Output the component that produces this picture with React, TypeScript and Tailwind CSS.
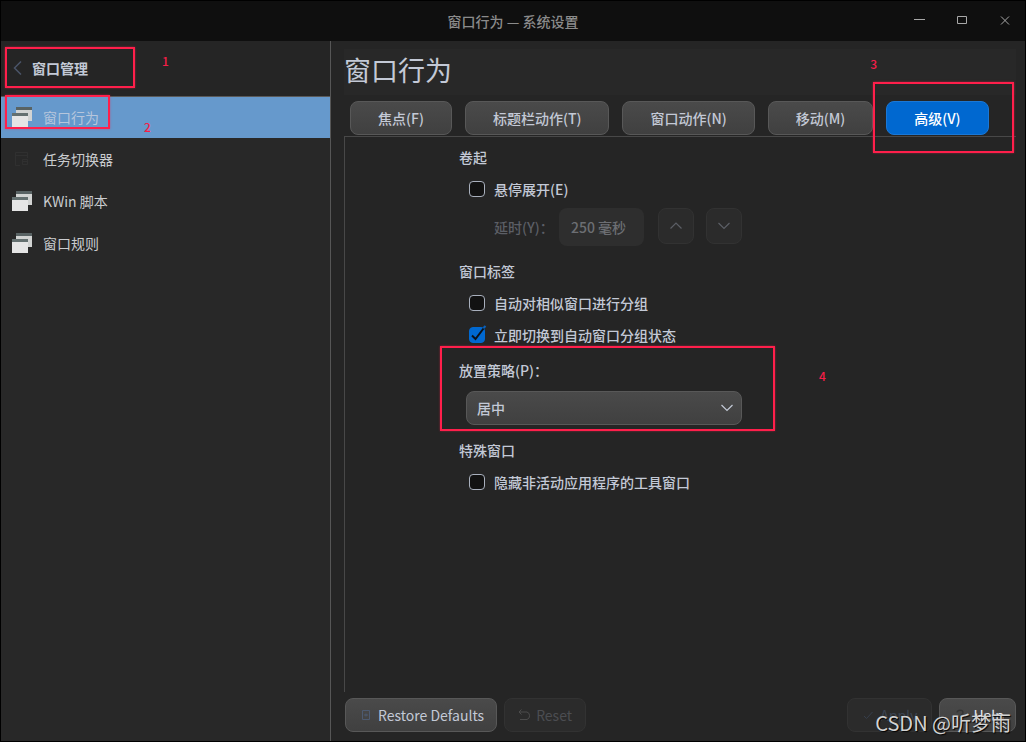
import { useState } from "react";
import type { ReactNode } from "react";

function Mark({ className }: { className: string }) {
  return <div aria-hidden="true" className={`pointer-events-none absolute z-10 border-2 border-[#ff1f4b] shadow-[0_0_2px_rgba(255,31,75,0.5)] ${className}`} />;
}

function MarkNumber({ children, className }: { children: ReactNode; className: string }) {
  return <span className={`pointer-events-none absolute z-10 text-xs font-medium leading-4 text-[#f51e48] ${className}`}>{children}</span>;
}

function WindowsIcon() {
  return (
    <svg width="20" height="20" viewBox="0 0 20 20" shapeRendering="crispEdges" aria-hidden="true">
      <rect x="4" y="0" width="16" height="14" fill="#d2d4d3" />
      <rect x="4" y="0" width="16" height="3" fill="#596364" />
      <rect x="0" y="6" width="16" height="14" fill="#e5e5e5" />
      <rect x="0" y="6" width="16" height="3" fill="#647070" />
    </svg>
  );
}

function SwitcherIcon() {
  return (
    <svg width="20" height="20" viewBox="0 0 20 20" fill="none" stroke="#303030" aria-hidden="true">
      <path d="M8 16.500H3.500V3.500H15.500V9M3.500 6.500H15.500" />
      <path d="M10.500 10.500H15.500V15.500H10.500ZM10.500 12.500H15.500" />
    </svg>
  );
}

function Chevron({ up = false, className = "" }: { up?: boolean; className?: string }) {
  return (
    <svg width="14" height="10" viewBox="0 0 14 10" fill="none" stroke="currentColor" strokeWidth="1.2" className={className} aria-hidden="true">
      <path d={up ? "M1.500 7.500 7 2 12.500 7.500" : "M1.500 2 7 7.500 12.500 2"} />
    </svg>
  );
}

function Check({ label, defaultChecked = false }: { label: string; defaultChecked?: boolean }) {
  return (
    <label className="relative ml-2.5 flex h-5 items-center gap-[9px]">
      <input
        type="checkbox"
        defaultChecked={defaultChecked}
        className="peer size-4 appearance-none rounded-[4px] border border-[#a9b0bd] bg-[#121212] checked:border-[#0068d0] checked:bg-[#0068d0]"
      />
      <svg width="18" height="18" viewBox="0 0 18 18" fill="none" className="absolute left-0 top-0 hidden peer-checked:block" aria-hidden="true">
        <path d="M14.500 3 16.500 1" stroke="#0a61bb" strokeWidth="2.200" />
        <path d="M3 10.500 6.500 14 14.500 3.500" stroke="#0b1017" strokeWidth="2" />
      </svg>
      {label}
    </label>
  );
}

const pages = ["窗口行为", "任务切换器", "KWin 脚本", "窗口规则"];
const tabs = ["焦点(F)", "标题栏动作(T)", "窗口动作(N)", "移动(M)", "高级(V)"];
const raised = "border border-[#585858] bg-linear-to-b from-[#4a4a4a] to-[#404040]";
const faded = "border border-[#323232] bg-[#2b2b2b]";

export default function App() {
  const [tab, setTab] = useState(4);
  return (
    <div className="relative flex min-h-screen flex-col border border-black bg-[#252525] font-['Noto_Sans_CJK_SC',sans-serif] text-sm leading-5 text-[#c3c9d6]">
      <header className="grid h-10 grid-cols-[1fr_auto_1fr] items-center bg-[#0f0f0f] font-medium text-[#8b8b8b]">
        <h1 className="col-start-2">窗口行为 — 系统设置</h1>
        <div className="flex justify-end gap-[23px] pr-2.5 text-[#a8a8a8]">
          <button aria-label="最小化" className="flex size-5 items-center justify-center">
            <svg width="12" height="12" viewBox="0 0 12 12" stroke="currentColor" fill="none"><path d="M1 4.500H12" /></svg>
          </button>
          <button aria-label="最大化" className="flex size-5 items-center justify-center">
            <svg width="12" height="12" viewBox="0 0 12 12" stroke="currentColor" fill="none"><path d="M1.500 1.500H10.500V8.500H1.500Z" /></svg>
          </button>
          <button aria-label="关闭" className="flex size-5 items-center justify-center">
            <svg width="12" height="12" viewBox="0 0 12 12" stroke="currentColor" fill="none"><path d="M2 1.500 10 9.500M10 1.500 2 9.500" /></svg>
          </button>
        </div>
      </header>

      <div className="flex flex-1">
        <aside className="w-[330px] shrink-0 border-r border-[#565656] bg-[#282828]">
          <div className="relative flex h-14 items-center border-b border-[#5a5a5a] bg-[#252525] pb-px pl-3">
            <button className="flex items-center gap-2.5 font-bold">
              <svg width="9" height="14" viewBox="0 0 9 14" fill="none" stroke="#4a5468" strokeWidth="1.500" aria-hidden="true"><path d="M8 .5 1.500 7 8 13.500" /></svg>
              窗口管理
            </button>
            <Mark className="left-1 top-1.5 h-[41px] w-[130px]" />
            <MarkNumber className="left-[161px] top-3">1</MarkNumber>
          </div>
          <nav className="relative text-[#cacccf]">
            {pages.map((page, i) => (
              <a
                key={page}
                href="#"
                aria-current={i === 0 ? "page" : undefined}
                className={`flex items-center gap-[11px] pl-[11px] ${i === 0 ? "h-[41px] bg-[#6699cc] pb-px text-[#b6c6dc]" : "h-[42px]"}`}
              >
                {i === 1 ? <SwitcherIcon /> : <WindowsIcon />}
                {page}
              </a>
            ))}
            <Mark className="-top-0.5 left-1 h-[34px] w-[105px]" />
            <MarkNumber className="left-[143px] top-[22px]">2</MarkNumber>
          </nav>
        </aside>

        <main className="flex min-w-0 flex-1 flex-col pb-[9px] pl-[13px] pr-[9px] pt-2 font-medium">
          <div className="relative flex h-[46px] items-center bg-[#282828] pb-[5px]">
            <h2 className="text-[27px] font-normal leading-10">窗口行为</h2>
            <MarkNumber className="right-[139px] top-[7px]">3</MarkNumber>
          </div>
          <div role="tablist" className="mt-1.5 flex gap-[13px] pb-px pl-1.5">
            {tabs.map((name, i) => (
              <div key={name} className="relative">
                <button
                  role="tab"
                  aria-selected={tab === i}
                  onClick={() => setTab(i)}
                  className={`h-[34px] whitespace-nowrap rounded-lg px-[27px] ${tab === i ? "border border-[#1b78d6] bg-[#0068d0] text-white" : raised}`}
                >
                  {name}
                </button>
                {i === 4 && <Mark className="-left-[13px] -top-[19px] h-[71px] w-[141px]" />}
              </div>
            ))}
          </div>

          <section role="tabpanel" className="flex flex-1 flex-col gap-[15px] border-l border-t border-[#484848] pl-[114px] pt-2.5">
            <div>
              <h3 className="mb-3 font-medium">卷起</h3>
              <Check label="悬停展开(E)" />
              <div className="ml-[35px] mt-[9px] flex items-start text-[#5c5f66]">
                <label htmlFor="delay" className="w-[65px] leading-[38px]">延时(Y)：</label>
                <input id="delay" disabled defaultValue="250 毫秒" className="h-[38px] w-[85px] rounded-lg bg-[#2e2e2e] px-3 text-[#6c6e73]" />
                <button disabled aria-label="增加" className={`ml-3.5 flex size-9 items-center justify-center rounded-lg ${faded}`}><Chevron up /></button>
                <button disabled aria-label="减少" className={`ml-3 flex size-9 items-center justify-center rounded-lg ${faded}`}><Chevron /></button>
              </div>
            </div>
            <div className="flex flex-col gap-3">
              <h3 className="font-medium">窗口标签</h3>
              <Check label="自动对相似窗口进行分组" />
              <Check label="立即切换到自动窗口分组状态" defaultChecked />
            </div>
            <div className="relative">
              <label htmlFor="placement" className="block">放置策略(P)：</label>
              <div className="relative ml-[7px] mt-[11px] w-[276px]">
                <select id="placement" className={`block h-[34px] w-full appearance-none rounded-lg px-2.5 ${raised}`}>
                  <option>居中</option>
                </select>
                <Chevron className="pointer-events-none absolute right-2 top-3" />
              </div>
              <Mark className="-left-[19px] -top-3.5 h-[85px] w-[335px]" />
              <MarkNumber className="left-[360px] top-2">4</MarkNumber>
            </div>
            <div>
              <h3 className="mb-3 font-medium">特殊窗口</h3>
              <Check label="隐藏非活动应用程序的工具窗口" />
            </div>
          </section>

          <footer className="mt-1.5 flex gap-[7px] pl-px font-normal">
            <button className={`flex h-[34px] items-center gap-1.5 rounded-lg px-3 ${raised}`}>
              <svg width="14" height="14" viewBox="0 0 14 14" fill="none" stroke="#4d5a70" aria-hidden="true"><path d="M4.500 2.500H11.500V11.500H4.500ZM6 7H10M8 5.500V8.500" /></svg>
              Restore Defaults
            </button>
            <button disabled className={`flex h-[34px] items-center gap-1 rounded-lg px-[13px] text-[#4b4d51] ${faded}`}>
              <svg width="14" height="12" viewBox="0 0 14 12" fill="none" stroke="#4c4c4c" aria-hidden="true"><path d="M3.500 .5 1 3 3.500 5.500M1 3H9A4 4 0 0 1 9 10.500H2" /></svg>
              Reset
            </button>
            <button disabled className={`ml-auto flex h-[34px] items-center gap-1.5 rounded-lg px-3.5 text-[#3c4452] ${faded}`}>
              <svg width="12" height="12" viewBox="0 0 12 12" fill="none" stroke="#363e4b" aria-hidden="true"><path d="M2 7 4.500 9.500 10.500 3" /></svg>
              Apply
            </button>
            <button className={`flex h-[34px] items-center gap-2 rounded-lg pl-[15px] pr-[11px] text-[#e4e9f4] ${raised}`}>
              <svg width="10" height="12" viewBox="0 0 10 12" fill="none" stroke="#343434" strokeWidth="1.300" aria-hidden="true"><path d="M2 3.500C2 .5 8 .5 8 3.500 8 5.500 5 5.500 5 8M5 9.500V11" /></svg>
              Help
            </button>
          </footer>
        </main>
      </div>
      <div className="pointer-events-none absolute bottom-1 right-3.5 z-20 text-xl leading-7 text-[#d2d2d2] [text-shadow:1px_1px_1px_#000]">CSDN @听梦雨</div>
    </div>
  );
}
